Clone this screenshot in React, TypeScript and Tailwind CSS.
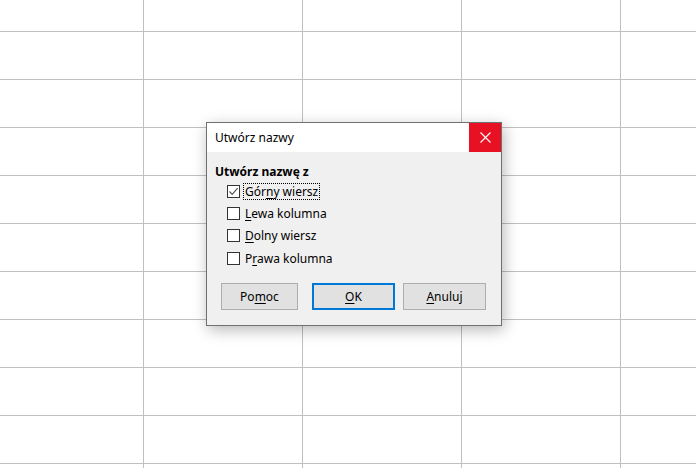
import React from 'react';

const ROWS = 11;
const COLS = 5;

function Check({ checked, label, mnemonic, focused }: { checked?: boolean; label: string; mnemonic: number; focused?: boolean }) {
  return (
    <div className="flex items-center h-[22px]">
      <span className="w-[13px] h-[13px] border border-[#333333] bg-white flex items-center justify-center shrink-0">
        {checked && (
          <svg width="11" height="11" viewBox="0 0 11 11">
            <path d="M1.5 5.5 L4.2 8.3 L9.6 2.2" fill="none" stroke="#555555" strokeWidth="1.2" />
          </svg>
        )}
      </span>
      <span className={`ml-[4px] px-[1px] leading-[15px] ${focused ? 'outline outline-1 outline-dotted outline-black' : ''}`}>
        {label.slice(0, mnemonic)}
        <span className="underline underline-offset-[2px]">{label[mnemonic]}</span>
        {label.slice(mnemonic + 1)}
      </span>
    </div>
  );
}

function Btn({ label, mnemonic, w, primary }: { label: string; mnemonic: number; w: string; primary?: boolean }) {
  return (
    <button
      className={`${w} h-[27px] bg-[#e1e1e1] flex items-center justify-center text-black ${primary ? 'border-2 border-[#0078d7]' : 'border border-[#adadad]'}`}
    >
      <span>
        {label.slice(0, mnemonic)}
        <span className="underline underline-offset-[2px]">{label[mnemonic]}</span>
        {label.slice(mnemonic + 1)}
      </span>
    </button>
  );
}

export default function App() {
  return (
    <div className="relative w-[696px] h-[468px] overflow-hidden bg-white font-['Noto_Sans',sans-serif] text-[12px] text-black">
      {/* spreadsheet grid */}
      <div className="-mt-[16px] -ml-[15px] flex flex-col">
        {Array.from({ length: ROWS }).map((_, r) => (
          <div key={r} className="flex">
            {Array.from({ length: COLS }).map((_, c) => (
              <div key={c} className="w-[159px] h-[48px] shrink-0 border-r border-b border-[#c0c0c0]" />
            ))}
          </div>
        ))}
      </div>

      {/* dialog */}
      <div className="absolute left-[206px] top-[122px] w-[296px] h-[204px] border border-[#707070] bg-[#f0f0f0] shadow-[2px_4px_14px_rgba(0,0,0,0.28)] flex flex-col">
        <div className="h-[29px] bg-white flex items-stretch shrink-0">
          <div className="flex-1 flex items-center pl-[8px] pt-[1px] text-[12px]">Utwórz nazwy</div>
          <div className="w-[32px] bg-[#e81123] flex items-center justify-center">
            <svg width="11" height="11" viewBox="0 0 11 11">
              <path d="M0.5 0.5 L10.5 10.5 M10.5 0.5 L0.5 10.5" stroke="white" strokeWidth="1.1" />
            </svg>
          </div>
        </div>
        <div className="flex flex-col px-[8px] pt-[12px]">
          <div className="font-bold leading-[16px]">Utwórz nazwę z</div>
          <div className="flex flex-col pl-[12px]">
            <Check checked focused label="Górny wiersz" mnemonic={3} />
            <Check label="Lewa kolumna" mnemonic={0} />
            <Check label="Dolny wiersz" mnemonic={0} />
            <div className="h-[1px]" />
            <Check label="Prawa kolumna" mnemonic={1} />
          </div>
          <div className="flex items-center pl-[6px] pt-[14px]">
            <Btn label="Pomoc" mnemonic={2} w="w-[77px]" />
            <div className="w-[14px]" />
            <Btn label="OK" mnemonic={0} w="w-[83px]" primary />
            <div className="w-[8px]" />
            <Btn label="Anuluj" mnemonic={0} w="w-[83px]" />
          </div>
        </div>
      </div>
    </div>
  );
}
